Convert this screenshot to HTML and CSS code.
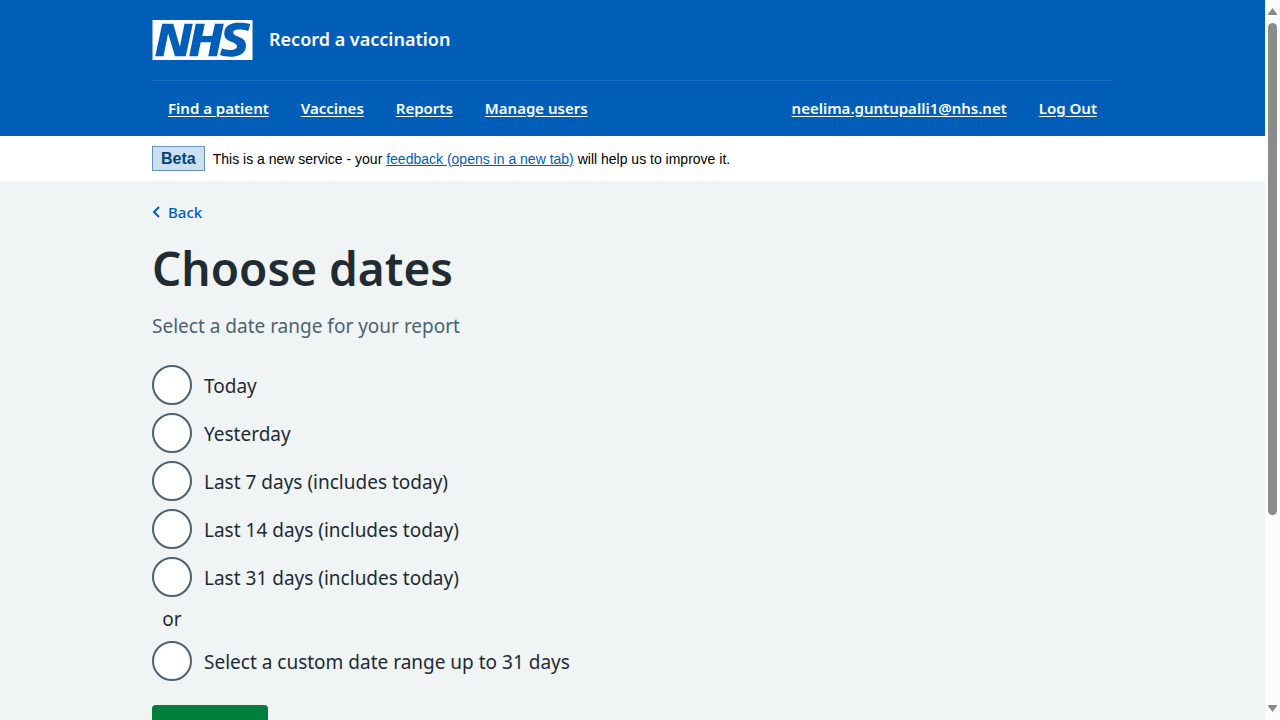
FILE: index.html
```html
<!DOCTYPE html>
<html lang="en">
<head>
<meta charset="utf-8">
<meta name="viewport" content="width=device-width, initial-scale=1">
<title>Choose dates – Record a vaccination</title>
<link rel="stylesheet" href="styles.css">
</head>
<body>
<div class="app">
  <div class="page">
    <header class="header">
      <div class="container">
        <div class="header-top">
          <svg class="logo" viewBox="0 0 200 80" role="img" aria-label="NHS">
            <path fill="#fff" d="M200 0v80H0V0h200Zm-27.500 5.500c-14.500 0-29 5-29 22 0 10.200 7.700 13.500 14.700 16.300l.7.300c5.400 2 10.100 3.900 10.100 8.400 0 6.500-8.500 7.500-14 7.500s-12.500-1.500-16-3.500L135 70c5.500 2 13.500 3.500 20 3.500 15.500 0 32-4.500 32-22.500 0-19.500-25.500-16.500-25.500-25.500 0-5.500 5.500-6.500 15.500-6.500a35 35 0 0 1 14.500 3l4-13.500c-4.500-2-12-3-21-3Zm-131 2h-22l-14 65H22l9-45h.5l13.500 45h21.500l14-65H64l-9 45h-.5l-13-45Zm63 0h-18l-13 65h17l6-28H117l-5.500 28H129l13.500-65H125L119.500 32h-20l5-24.500Z"/>
          </svg>
          <span class="service-name">Record a vaccination</span>
        </div>
        <nav class="nav" aria-label="Menu">
          <a class="nav-link" href="#">Find a patient</a>
          <a class="nav-link" href="#">Vaccines</a>
          <a class="nav-link" href="#">Reports</a>
          <a class="nav-link" href="#">Manage users</a>
          <a class="nav-link nav-account" href="#">neelima.guntupalli1@nhs.net</a>
          <a class="nav-link" href="#">Log Out</a>
        </nav>
      </div>
    </header>
    <div class="banner">
      <div class="container banner-row">
        <strong class="tag">Beta</strong>
        <span>This is a new service - your <a class="banner-link" href="#">feedback (opens in a new tab)</a> will help us to improve it.</span>
      </div>
    </div>
    <main class="container main">
      <a class="back" href="#">
        <svg class="back-icon" viewBox="0 0 8 12" aria-hidden="true"><path d="M7 1 2 6l5 5" fill="none" stroke="currentColor" stroke-width="2"/></svg>
        Back
      </a>
      <form>
        <fieldset class="fieldset">
          <legend><h1 class="title">Choose dates</h1></legend>
          <p class="hint">Select a date range for your report</p>
          <div class="radios">
            <div class="radio-row"><input class="radio" type="radio" name="range" id="r1"><label class="radio-label" for="r1">Today</label></div>
            <div class="radio-row"><input class="radio" type="radio" name="range" id="r2"><label class="radio-label" for="r2">Yesterday</label></div>
            <div class="radio-row"><input class="radio" type="radio" name="range" id="r3"><label class="radio-label" for="r3">Last 7 days (includes today)</label></div>
            <div class="radio-row"><input class="radio" type="radio" name="range" id="r4"><label class="radio-label" for="r4">Last 14 days (includes today)</label></div>
            <div class="radio-row"><input class="radio" type="radio" name="range" id="r5"><label class="radio-label" for="r5">Last 31 days (includes today)</label></div>
            <div class="divider">or</div>
            <div class="radio-row"><input class="radio" type="radio" name="range" id="r6"><label class="radio-label" for="r6">Select a custom date range up to 31 days</label></div>
          </div>
        </fieldset>
        <button class="button" type="submit">Continue</button>
      </form>
    </main>
  </div>
  <div class="scrollbar" aria-hidden="true">
    <svg class="arrow" viewBox="0 0 9 7"><path d="M4.500 0 9 6v1H0V6Z" fill="#8b8b8b"/></svg>
    <div class="track"><div class="thumb"></div></div>
    <svg class="arrow" viewBox="0 0 9 7"><path d="M4.500 7 9 1V0H0v1Z" fill="#8b8b8b"/></svg>
  </div>
</div>
</body>
</html>
```
FILE: styles.css
```css
* { box-sizing: border-box; }
body {
  margin: 0;
  font-family: "Noto Sans", "Open Sans", sans-serif;
  font-size: 19px;
  line-height: 28px;
  color: #212b32;
}
.app { display: grid; grid-template-columns: 1fr 15px; height: 100vh; }
.page { background: #f0f4f5; overflow-y: auto; scrollbar-width: none; }
.container { max-width: 961px; margin: 0 auto; }

.header { background: #005eb8; color: #fff; }
.header-top {
  display: flex;
  align-items: center;
  gap: 16px;
  padding: 20px 0;
  border-bottom: 1px solid #196ebf;
}
.logo { display: block; width: 101px; height: 40px; }
.service-name { padding-bottom: 2px; font-size: 18px; font-weight: 600; }
.nav { display: flex; gap: 32px; padding: 15px 16px 16px; font-size: 15px; line-height: 24px; font-weight: 600; }
.nav-link { color: #fff; text-underline-offset: 2px; }
.nav-account { margin-left: auto; }

.banner { background: #fff; color: #000; font-family: "Liberation Sans", Arial, sans-serif; font-size: 14px; line-height: 24px; }
.banner-row { display: flex; align-items: center; gap: 8px; padding: 10px 0; }
.tag { padding: 0 8px; border: 1px solid #6694c1; background: #ccdff1; color: #00437f; font-size: 16px; line-height: 23px; }
.banner-link { color: #005eb8; }

.main { padding-top: 19px; }
.back { display: flex; width: fit-content; align-items: center; gap: 8px; color: #005eb8; font-size: 15px; font-weight: 500; line-height: 24px; text-decoration: none; }
.back-icon { width: 8px; height: 12px; }
.fieldset { margin: 0; padding: 0; border: 0; }
.fieldset legend { padding: 0; }
.title { margin: 16px 0; font-size: 46px; line-height: 56px; font-weight: 600; }
.hint { margin: 0 0 25px; color: #4c6272; }
.radios { display: flex; flex-direction: column; gap: 8px; }
.radio-row { display: flex; align-items: center; gap: 12px; }
.radio-label { padding-top: 2px; }
.radio { appearance: none; width: 40px; height: 40px; margin: 0; border: 2px solid #4c6272; border-radius: 50%; background: #fff; }
.radio:checked { background: radial-gradient(#212b32 10px, #fff 11px); }
.divider { width: 40px; text-align: center; }
.button { margin: 24px 0 40px; padding: 16px; border: 0; border-radius: 4px; box-shadow: 0 4px 0 #00401e; background: #007f3b; color: #fff; font: inherit; font-weight: 600; }

.scrollbar { display: flex; flex-direction: column; align-items: center; gap: 8px; padding: 8px 0; background: #fcfcfc; }
.arrow { width: 9px; height: 7px; }
.track { flex: 1; width: 9px; }
.thumb { height: 73%; border-radius: 5px; background: #8b8b8b; }
```
